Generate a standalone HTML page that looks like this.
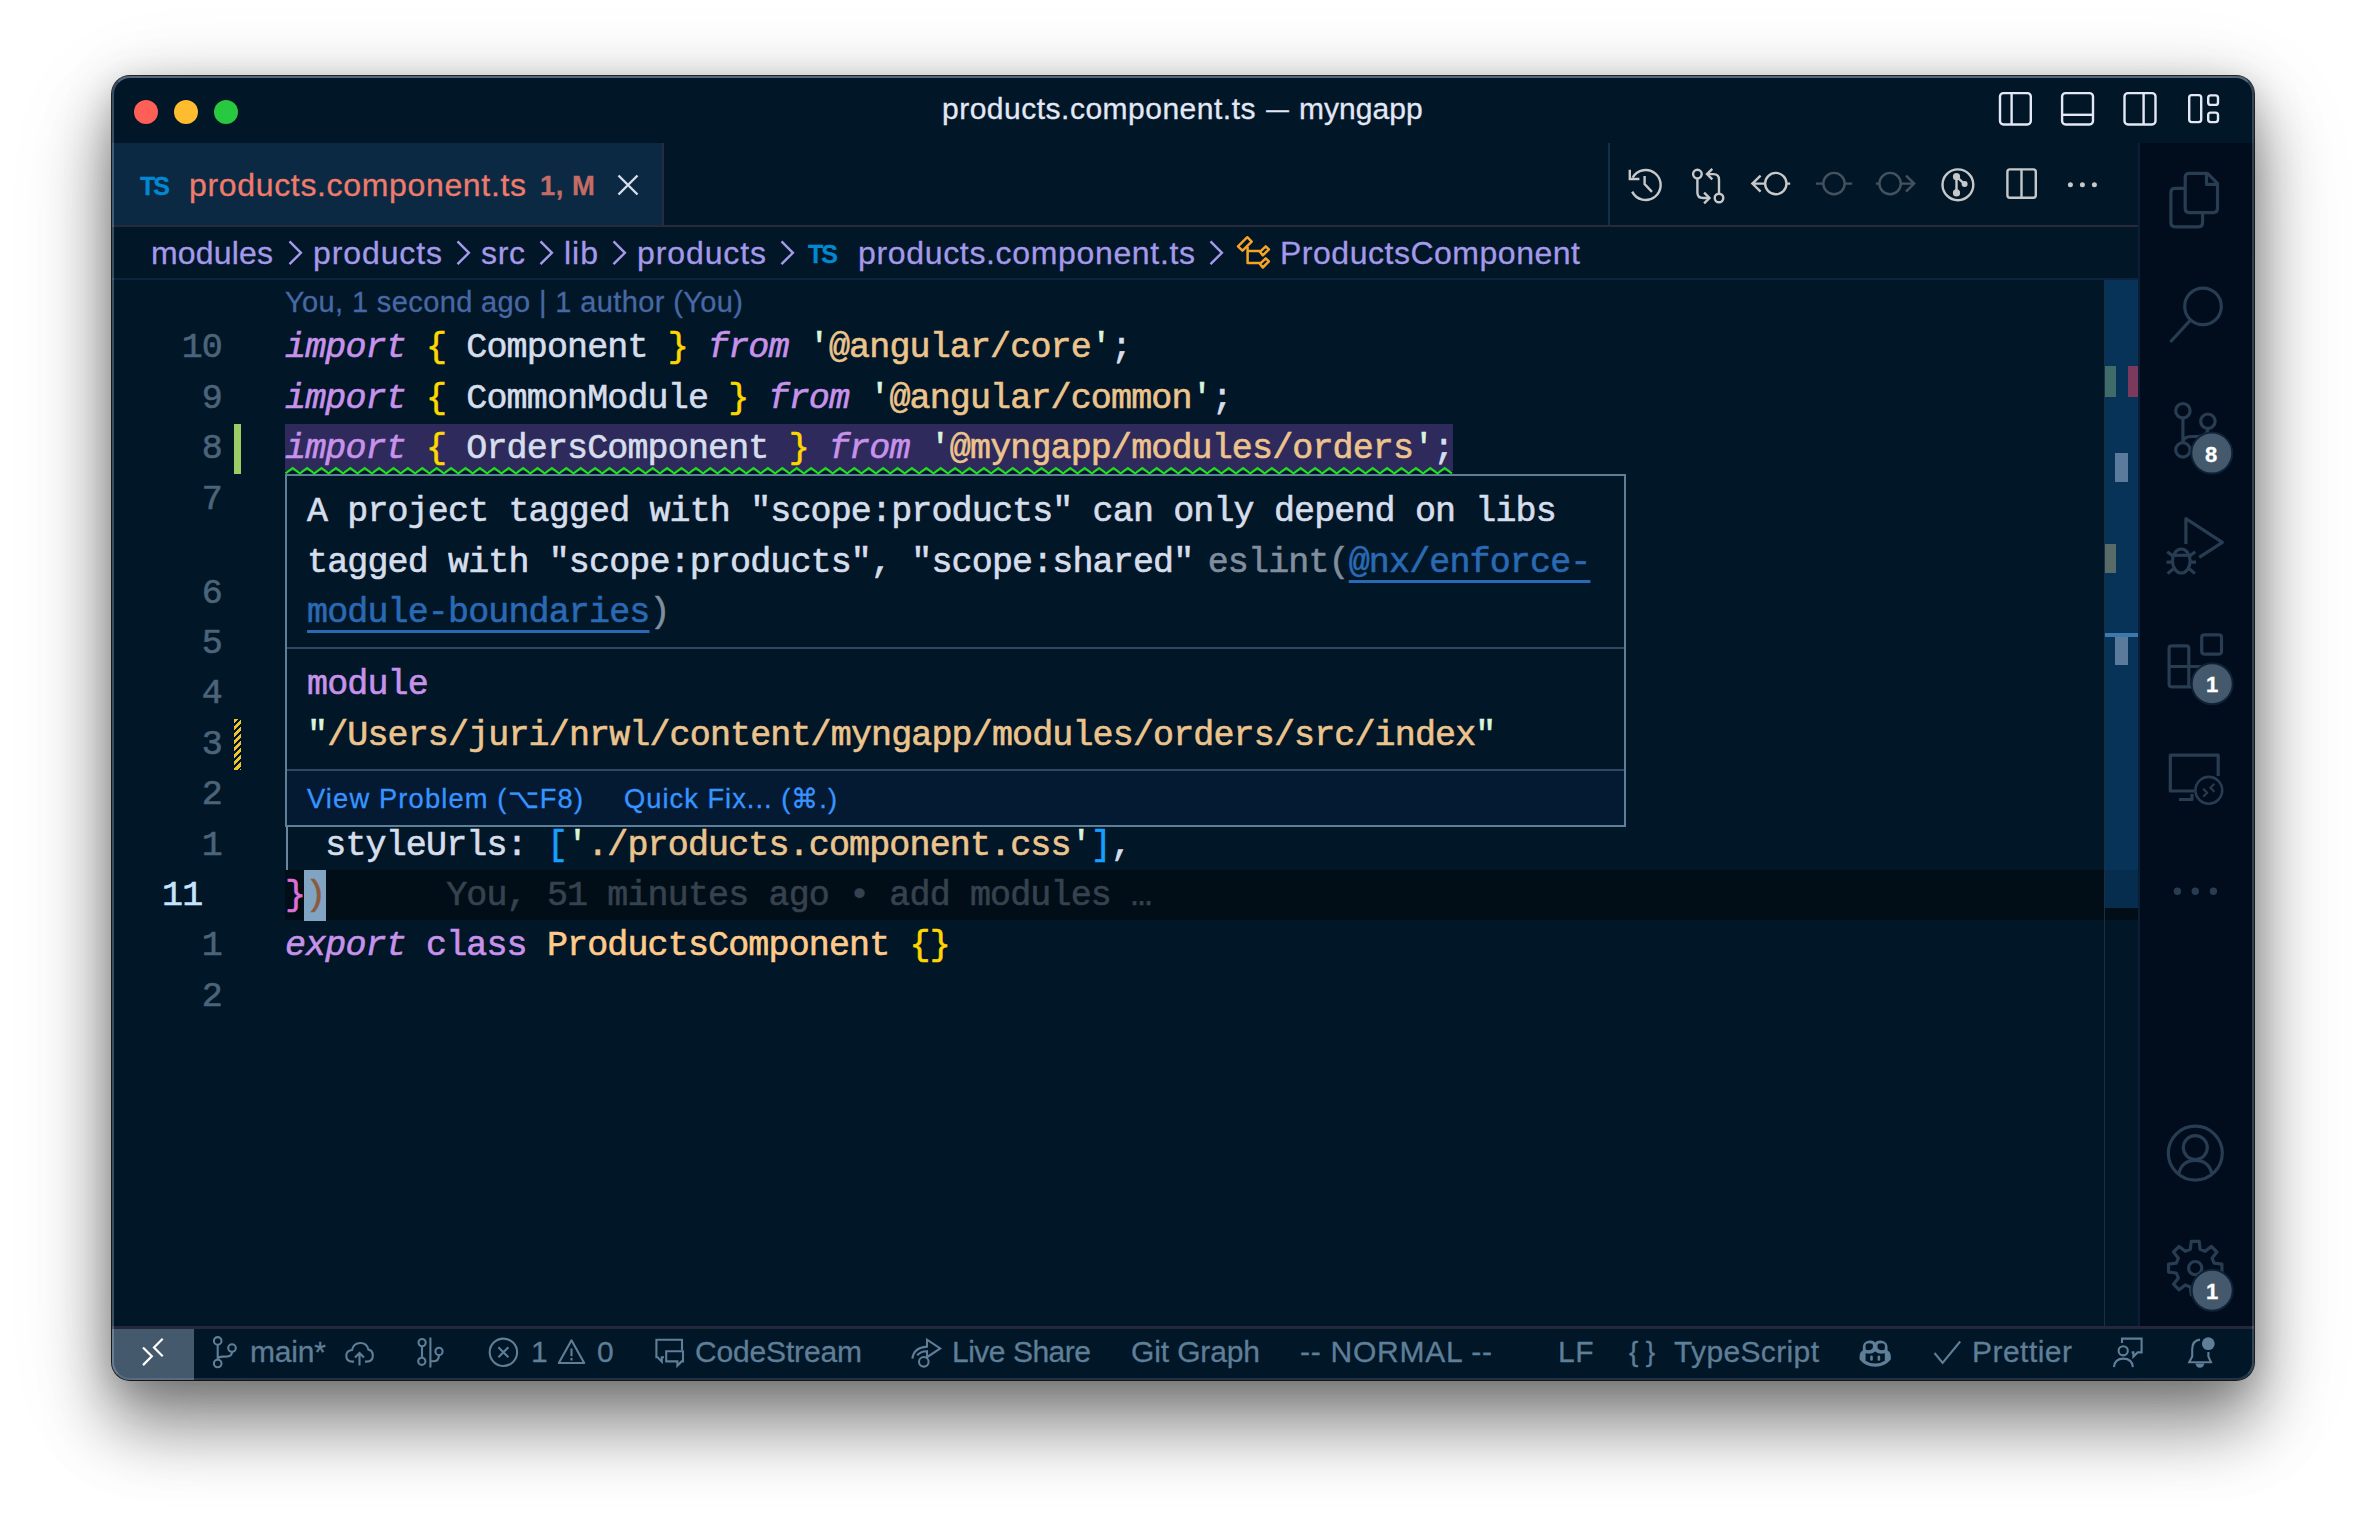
<!DOCTYPE html>
<html lang="en"><head><meta charset="utf-8"><title>products.component.ts — myngapp</title>
<style>
html,body{margin:0;padding:0;}
body{width:2366px;height:1528px;overflow:hidden;background:#fff;position:relative;font-family:"Liberation Sans",sans-serif;}
.b{position:absolute;box-sizing:border-box;}
.t{position:absolute;white-space:pre;-webkit-text-stroke:0.3px currentColor;}
#shadow{left:112px;top:76px;width:2142px;height:1304px;border-radius:18px;
  box-shadow:0 0 0 1px rgba(0,0,0,0.85),0 44px 66px 2px rgba(0,0,0,0.40),0 30px 110px rgba(0,0,0,0.14),0 8px 30px rgba(0,0,0,0.12),0 0 56px rgba(0,0,0,0.10);}
#win{left:112px;top:76px;width:2142px;height:1304px;border-radius:18px;background:#011627;overflow:hidden;}
#win .b{position:absolute;}
#rim{left:112px;top:76px;width:2142px;height:1304px;border-radius:18px;border:2px solid;border-color:rgba(205,222,242,0.42) rgba(191,212,242,0.26) rgba(191,212,242,0.16) rgba(191,212,242,0.30);pointer-events:none;}
.ln,.num,.hv{-webkit-text-stroke:0.6px currentColor;}
.mono{font-family:"Liberation Mono",monospace;}
.ln{position:absolute;left:285px;height:50.4px;line-height:50.4px;white-space:pre;font-family:"Liberation Mono",monospace;font-size:35px;letter-spacing:-0.86px;color:#d6deeb;}
.num{position:absolute;left:122px;width:100px;text-align:right;height:50.4px;line-height:50.4px;white-space:pre;font-family:"Liberation Mono",monospace;font-size:35px;letter-spacing:-0.86px;color:#4b6479;}
.k{color:#c792ea;font-style:italic;}
.kk{color:#c792ea;}
.y{color:#ffd700;}
.s{color:#ecc48d;}
.q{color:#d9f5dd;}
.c{color:#ffcb8b;}
.bl{color:#179fff;}
.pk{color:#da70d6;}
.hv{position:absolute;left:307px;height:50.4px;line-height:50.4px;white-space:pre;font-family:"Liberation Mono",monospace;font-size:35px;letter-spacing:-0.86px;color:#d6deeb;}
.dim{color:#818e9d;}
.lk{color:#2a6ab4;text-decoration:underline;text-decoration-thickness:2.5px;text-underline-offset:8px;}
svg#ic{position:absolute;left:0;top:0;width:2366px;height:1528px;pointer-events:none;}

</style></head>
<body>
<div class="b" id="shadow"></div>
<div class="b" id="win">
  <!-- coordinates inside #win are page coords minus (112,76) -->
  <div class="b" id="titlebar" style="left:0;top:0;width:2142px;height:67px;background:#011627;"></div>
  <div class="b" id="tabbar" style="left:0;top:67px;width:2027px;height:84px;background:#011627;border-bottom:2px solid #262a39;"></div>
  <div class="b" id="tab" style="left:0;top:67px;width:552px;height:82px;background:#0b2942;border-right:2px solid #272b3b;"></div>
  <div class="b" id="actsep" style="left:1496px;top:67px;width:2px;height:82px;background:#13304b;"></div>
  <div class="b" id="crumbs" style="left:0;top:151px;width:2027px;height:53px;background:#011627;border-bottom:2px solid #0b2540;"></div>
  <div class="b" id="editor" style="left:0;top:204px;width:2027px;height:1047px;background:#011627;"></div>
  <!-- current line highlight -->
  <div class="b" style="left:173px;top:794px;width:1854px;height:50px;background:#010e17;"></div>
  <!-- error line highlight -->
  <div class="b" style="left:173px;top:348px;width:1168px;height:47px;background:#2f2a5c;"></div>
  <!-- git gutter -->
  <div class="b" style="left:122px;top:348px;width:7px;height:50px;background:#9ccc65;"></div>
  <div class="b" style="left:122px;top:643px;width:7px;height:51px;background:repeating-linear-gradient(135deg,#efc430 0 3.2px,#011627 3.2px 5px);"></div>
  <!-- indent guide -->
  <div class="b" style="left:174px;top:744px;width:2px;height:50px;background:#6c869e;"></div>
  <!-- cursor -->
  <div class="b" style="left:192px;top:794px;width:22px;height:51px;background:#80a4c2;"></div>
  <!-- scrollbar / overview ruler -->
  <div class="b" style="left:1992px;top:204px;width:1px;height:1047px;background:#1b2f44;"></div>
  <div class="b" style="left:1993px;top:204px;width:34px;height:628px;background:#083358;"></div>
  <div class="b" style="left:1993px;top:794px;width:34px;height:38px;background:#062c4e;"></div>
  <div class="b" style="left:1993px;top:832px;width:34px;height:12px;background:#010e17;"></div>
  <div class="b" style="left:1993px;top:290px;width:11px;height:31px;background:#3f6b68;"></div>
  <div class="b" style="left:2016px;top:290px;width:10px;height:31px;background:#7b3a5c;"></div>
  <div class="b" style="left:2003px;top:377px;width:13px;height:29px;background:#5b7a9c;"></div>
  <div class="b" style="left:1993px;top:468px;width:11px;height:29px;background:#586b66;"></div>
  <div class="b" style="left:1993px;top:557px;width:34px;height:4px;background:#3f78ad;"></div>
  <div class="b" style="left:2003px;top:561px;width:13px;height:28px;background:#5b7a9c;"></div>
  <!-- activity bar -->
  <div class="b" id="actbar" style="left:2026px;top:67px;width:116px;height:1184px;background:#010c1d;border-left:2px solid #0a1f36;"></div>
  <!-- status bar -->
  <div class="b" id="status" style="left:0;top:1250px;width:2142px;height:54px;background:#011627;border-top:3px solid #24283a;"></div>
  <div class="b" id="remote" style="left:0;top:1253px;width:82px;height:51px;background:#44596b;"></div>
  <!-- hover widget -->
  <div class="b" id="hover" style="left:173px;top:398px;width:1341px;height:353px;background:#011627;border:2px solid #5f7e97;"></div>
  <div class="b" style="left:175px;top:571px;width:1337px;height:2px;background:#2f4860;"></div>
  <div class="b" style="left:175px;top:693px;width:1337px;height:2px;background:#2f4860;"></div>
  <div class="b" style="left:175px;top:695px;width:1337px;height:54px;background:#031a32;"></div>
</div>
<div class="b" id="rim"></div>
<!-- traffic lights -->
<div class="b" style="left:134px;top:100px;width:24px;height:24px;border-radius:50%;background:#ff5f57;"></div>
<div class="b" style="left:174px;top:100px;width:24px;height:24px;border-radius:50%;background:#febc2e;"></div>
<div class="b" style="left:214px;top:100px;width:24px;height:24px;border-radius:50%;background:#28c840;"></div>

<div id="code">
<div class="num" style="top:323.4px">10</div>
<div class="num" style="top:373.8px">9</div>
<div class="num" style="top:424.2px">8</div>
<div class="num" style="top:474.6px">7</div>
<div class="num" style="top:568.5px">6</div>
<div class="num" style="top:618.9px">5</div>
<div class="num" style="top:669.3px">4</div>
<div class="num" style="top:719.7px">3</div>
<div class="num" style="top:770.1px">2</div>
<div class="num" style="top:820.5px">1</div>
<div class="num" style="top:870.9px;left:162px;text-align:left;color:#c5e4fd">11</div>
<div class="num" style="top:921.3px">1</div>
<div class="num" style="top:971.7px">2</div>

<div class="ln" style="top:323.4px"><span class="k">import</span> <span class="y">{</span> Component <span class="y">}</span> <span class="k">from</span> <span class="q">'</span><span class="s">@angular/core</span><span class="q">'</span>;</div>
<div class="ln" style="top:373.8px"><span class="k">import</span> <span class="y">{</span> CommonModule <span class="y">}</span> <span class="k">from</span> <span class="q">'</span><span class="s">@angular/common</span><span class="q">'</span>;</div>
<div class="ln" style="top:424.2px"><span class="k">import</span> <span class="y">{</span> OrdersComponent <span class="y">}</span> <span class="k">from</span> <span class="q">'</span><span class="s">@myngapp/modules/orders</span><span class="q">'</span>;</div>
<div class="ln" style="top:820.5px">  styleUrls: <span class="bl">[</span><span class="q">'</span><span class="s">./products.component.css</span><span class="q">'</span><span class="bl">]</span>,</div>
<div class="ln" style="top:870.9px"><span class="pk">}</span><span style="color:#8b5a3c">)</span>      <span style="color:#36424e">You, 51 minutes ago • add modules …</span></div>
<div class="ln" style="top:921.3px"><span class="k">export</span> <span class="kk">class</span> <span class="c">ProductsComponent</span> <span class="y">{}</span></div>

<div class="hv" style="top:487.4px">A project tagged with "scope:products" can only depend on libs</div>
<div class="hv" style="top:537.8px">tagged with "scope:products", "scope:shared"<span class="dim" style="padding-left:14.4px">eslint(</span><span class="lk">@nx/enforce-</span></div>
<div class="hv" style="top:588.2px"><span class="lk">module-boundaries</span><span class="dim">)</span></div>
<div class="hv" style="top:659.9px"><span class="kk">module</span></div>
<div class="hv" style="top:710.5px"><span class="q">"</span><span class="s">/Users/juri/nrwl/content/myngapp/modules/orders/src/index</span><span class="q">"</span></div>
</div>

<svg id="ic" viewBox="0 0 2366 1528" fill="none" stroke-linecap="butt" stroke-linejoin="miter">
<!-- squiggle -->
<polyline points="285.5,473.4 292.7,468.0 299.9,473.4 307.1,468.0 314.3,473.4 321.5,468.0 328.7,473.4 335.9,468.0 343.1,473.4 350.3,468.0 357.5,473.4 364.7,468.0 371.9,473.4 379.1,468.0 386.3,473.4 393.5,468.0 400.7,473.4 407.9,468.0 415.1,473.4 422.3,468.0 429.5,473.4 436.7,468.0 443.9,473.4 451.1,468.0 458.3,473.4 465.5,468.0 472.7,473.4 479.9,468.0 487.1,473.4 494.3,468.0 501.5,473.4 508.7,468.0 515.9,473.4 523.1,468.0 530.3,473.4 537.5,468.0 544.7,473.4 551.9,468.0 559.1,473.4 566.3,468.0 573.5,473.4 580.7,468.0 587.9,473.4 595.1,468.0 602.3,473.4 609.5,468.0 616.7,473.4 623.9,468.0 631.1,473.4 638.3,468.0 645.5,473.4 652.7,468.0 659.9,473.4 667.1,468.0 674.3,473.4 681.5,468.0 688.7,473.4 695.9,468.0 703.1,473.4 710.3,468.0 717.5,473.4 724.7,468.0 731.9,473.4 739.1,468.0 746.3,473.4 753.5,468.0 760.7,473.4 767.9,468.0 775.1,473.4 782.3,468.0 789.5,473.4 796.7,468.0 803.9,473.4 811.1,468.0 818.3,473.4 825.5,468.0 832.7,473.4 839.9,468.0 847.1,473.4 854.3,468.0 861.5,473.4 868.7,468.0 875.9,473.4 883.1,468.0 890.3,473.4 897.5,468.0 904.7,473.4 911.9,468.0 919.1,473.4 926.3,468.0 933.5,473.4 940.7,468.0 947.9,473.4 955.1,468.0 962.3,473.4 969.5,468.0 976.7,473.4 983.9,468.0 991.1,473.4 998.3,468.0 1005.5,473.4 1012.7,468.0 1019.9,473.4 1027.1,468.0 1034.3,473.4 1041.5,468.0 1048.7,473.4 1055.9,468.0 1063.1,473.4 1070.3,468.0 1077.5,473.4 1084.7,468.0 1091.9,473.4 1099.1,468.0 1106.3,473.4 1113.5,468.0 1120.7,473.4 1127.9,468.0 1135.1,473.4 1142.3,468.0 1149.5,473.4 1156.7,468.0 1163.9,473.4 1171.1,468.0 1178.3,473.4 1185.5,468.0 1192.7,473.4 1199.9,468.0 1207.1,473.4 1214.3,468.0 1221.5,473.4 1228.7,468.0 1235.9,473.4 1243.1,468.0 1250.3,473.4 1257.5,468.0 1264.7,473.4 1271.9,468.0 1279.1,473.4 1286.3,468.0 1293.5,473.4 1300.7,468.0 1307.9,473.4 1315.1,468.0 1322.3,473.4 1329.5,468.0 1336.7,473.4 1343.9,468.0 1351.1,473.4 1358.3,468.0 1365.5,473.4 1372.7,468.0 1379.9,473.4 1387.1,468.0 1394.3,473.4 1401.5,468.0 1408.7,473.4 1415.9,468.0 1423.1,473.4 1430.3,468.0 1437.5,473.4 1444.7,468.0 1451.9,473.4" stroke="#21de21" stroke-width="2.2" stroke-linejoin="miter"/>
<!-- title bar layout icons -->
<g stroke="#e4e8f5" stroke-width="2.4">
  <rect x="2000" y="93.1" width="30.8" height="31.4" rx="3.5"/><path d="M2011.6 93.1V124.5"/>
  <rect x="2062.1" y="93.1" width="30.9" height="31.4" rx="3.5"/><path d="M2062.1 114.8H2093"/>
  <rect x="2124.5" y="93.1" width="31" height="31.4" rx="3.5"/><path d="M2143.6 93.1V124.5"/>
  <rect x="2189.2" y="95.1" width="12" height="27" rx="2.5"/>
  <rect x="2208.2" y="95.4" width="9.8" height="9.5" rx="2.5"/>
  <rect x="2208.2" y="112.6" width="9.8" height="9.5" rx="2.5"/>
</g>
<!-- tab close -->
<path d="M618.5 175.5L637.5 194.5M637.5 175.5L618.5 194.5" stroke="#d6deeb" stroke-width="2.4"/>
<!-- editor actions -->
<g stroke="#c8c8c8" stroke-width="2.4">
  <!-- history -->
  <path d="M1632.6 177.6A15 15 0 1 1 1632.2 191.6"/>
  <path d="M1629.8 169.8V179H1639.4"/>
  <path d="M1644.6 176V184L1652 191.8"/>
  <!-- git compare -->
  <circle cx="1697.4" cy="174.1" r="4.3"/><circle cx="1719" cy="198" r="4.3"/>
  <path d="M1697.4 178.6V192.5Q1697.4 198 1703 198H1708.5"/>
  <path d="M1704.1 192.6L1709.5 198L1704.1 203.4"/>
  <path d="M1719 193.5V179.6Q1719 174.1 1713.4 174.1H1708"/>
  <path d="M1712.3 168.8L1707 174.1L1712.3 179.4"/>
  <!-- prev commit -->
  <circle cx="1775.8" cy="183.6" r="10.7"/>
  <path d="M1752.6 183.6H1765M1760.6 175.6L1752.4 183.6L1760.6 191.6M1786.6 183.6H1790.2"/>
</g>
<g stroke="#44525f" stroke-width="2.4">
  <circle cx="1834" cy="183.6" r="10.7"/><path d="M1816 183.6H1823.2M1844.8 183.6H1852.2"/>
  <circle cx="1890.1" cy="183.6" r="10.7"/>
  <path d="M1901 183.6H1914M1906 175.6L1914.2 183.6L1906 191.6M1875.8 183.6H1879.3"/>
</g>
<g stroke="#c8c8c8" stroke-width="2.4">
  <!-- gitlens -->
  <circle cx="1957.9" cy="184.8" r="15.4"/>
  <path d="M1956.5 176.7V192.9M1956.5 176.7L1964.6 184.1" />
  <circle cx="1956.5" cy="176.7" r="3.6" fill="#c8c8c8" stroke="none"/>
  <circle cx="1956.5" cy="192.9" r="3.6" fill="#c8c8c8" stroke="none"/>
  <circle cx="1964.6" cy="184.1" r="3" fill="#c8c8c8" stroke="none"/>
  <!-- split -->
  <rect x="2007.4" y="169.4" width="28.4" height="28.4" rx="2.5"/><path d="M2021.5 169.4V197.8"/>
</g>
<g fill="#c8c8c8"><circle cx="2070.4" cy="184.8" r="2.5"/><circle cx="2082.4" cy="184.8" r="2.5"/><circle cx="2094.4" cy="184.8" r="2.5"/></g>
<!-- breadcrumb chevrons -->
<g stroke="#a599e9" stroke-width="2.4">
  <path d="M289.5 241.4L300.9 252.8L289.5 264.2"/>
  <path d="M457.5 241.4L468.9 252.8L457.5 264.2"/>
  <path d="M540.5 241.4L551.9 252.8L540.5 264.2"/>
  <path d="M613.5 241.4L624.9 252.8L613.5 264.2"/>
  <path d="M781.5 241.4L792.9 252.8L781.5 264.2"/>
  <path d="M1210.5 241.4L1221.9 252.8L1210.5 264.2"/>
</g>
<!-- symbol class icon -->
<g stroke="#f5a526" stroke-width="2.5" stroke-linejoin="round">
  <path d="M1238 246.3L1247.3 237.2L1251.7 241.6L1242.5 250.7Z"/>
  <path d="M1247.6 246.8V263.1H1260.4M1247.6 251H1260.4"/>
  <path d="M1260 251.8L1265.7 246.3L1268.9 249.3L1262.8 255.4Z"/>
  <path d="M1260 263.9L1265.7 258.4L1268.9 261.4L1262.8 267.5Z"/>
</g>
<!-- activity bar icons -->
<g stroke="#283c52" stroke-width="3.2" stroke-linejoin="round">
  <!-- files -->
  <path d="M2207.5 173.4H2189.2Q2185.2 173.4 2185.2 177.4V208.6Q2185.2 212.6 2189.2 212.6H2213.5Q2217.5 212.6 2217.5 208.6V183.4Z"/>
  <path d="M2206.5 174V184.4H2217"/>
  <path d="M2185 188.3H2174.9Q2170.9 188.3 2170.9 192.3V222.8Q2170.9 226.8 2174.9 226.8H2198.6Q2202.6 226.8 2202.6 222.8V213"/>
  <!-- search -->
  <circle cx="2203" cy="306.4" r="18.3"/>
  <path d="M2190.6 319.8L2170.4 342"/>
  <!-- source control -->
  <circle cx="2182.9" cy="410.7" r="7.2"/><circle cx="2207.9" cy="421.2" r="7.2"/><circle cx="2182.9" cy="449.9" r="7.2"/>
  <path d="M2182.9 418V442.6M2207.9 428.5Q2207.9 436.5 2197 436.5H2192Q2182.9 436.5 2182.9 443"/>
  <!-- debug -->
  <path d="M2185.9 544V518.7L2222.4 542.3L2199.2 557.4"/>
  <ellipse cx="2181.3" cy="561" rx="8.8" ry="12"/>
  <path d="M2172.8 555.3H2189.8"/>
  <path d="M2167.2 551.8L2173.6 556.4M2166.5 562.2H2172.5M2167.6 573.6L2174 568.2M2195.4 551.8L2189 556.4M2196.1 562.2H2190.1M2195 573.6L2188.6 568.2"/>
  <!-- extensions -->
  <rect x="2201.7" y="634.9" width="19.8" height="19.2" rx="2.5"/>
  <path d="M2169.1 648.4Q2169.1 645.9 2171.6 645.9H2186.3Q2188.8 645.9 2188.8 648.4V686.8H2171.6Q2169.1 686.8 2169.1 684.3Z"/>
  <path d="M2169.1 666.5H2208V686.8H2188.8"/>
  <!-- remote explorer -->
  <path d="M2218.2 776V755.2H2170.3V791H2194"/>
  <path d="M2179 799.5H2192V794"/>
</g>
<g stroke="#283c52" stroke-width="2.6">
  <circle cx="2208.8" cy="790.3" r="13.4"/>
  <path d="M2203.2 788.7L2207.2 792.7L2203.2 796.7M2214.4 783.7L2210.4 787.7L2214.4 791.7" stroke-width="2"/>
</g>
<g fill="#283c52"><circle cx="2177.4" cy="891.3" r="3.7"/><circle cx="2195.3" cy="891.3" r="3.7"/><circle cx="2213.4" cy="891.3" r="3.7"/></g>
<g stroke="#283c52" stroke-width="3.2">
  <!-- account -->
  <circle cx="2195.3" cy="1153.1" r="27"/>
  <circle cx="2195.3" cy="1147.6" r="12"/>
  <path d="M2178.6 1174Q2182 1160.4 2195.3 1160.4Q2208.6 1160.4 2212 1174"/>
  <!-- gear -->
  <path d="M2200.1 1249.2L2199.2 1241.4L2191.2 1241.4L2190.3 1249.2L2185.3 1251.3L2179.1 1246.4L2173.5 1252.0L2178.4 1258.2L2176.3 1263.2L2168.5 1264.1L2168.5 1272.1L2176.3 1273.0L2178.4 1278.0L2173.5 1284.2L2179.1 1289.8L2185.3 1284.9L2190.3 1287.0L2191.2 1294.8L2199.2 1294.8L2200.1 1287.0L2205.1 1284.9L2211.3 1289.8L2216.9 1284.2L2212.0 1278.0L2214.1 1273.0L2221.9 1272.1L2221.9 1264.1L2214.1 1263.2L2212.0 1258.2L2216.9 1252.0L2211.3 1246.4L2205.1 1251.3Z" stroke-linejoin="round"/>
  <circle cx="2195.2" cy="1268.1" r="6.6"/>
</g>
<!-- badges -->
<g fill="#44596b" stroke="#0d2238" stroke-width="2">
  <circle cx="2211.8" cy="453.1" r="20.5"/>
  <circle cx="2212.2" cy="683.7" r="20.5"/>
  <circle cx="2212.2" cy="1290.3" r="20.5"/>
</g>

<!-- status bar icons -->
<path d="M143 1347.5L151.8 1356.3L143 1365.1M162.7 1338.7L154 1347.5L162.7 1356.3" stroke="#ffffff" stroke-width="2.2"/>
<g stroke="#5f7e97" stroke-width="2.1">
  <!-- branch -->
  <circle cx="217.7" cy="1340.9" r="3.8"/><circle cx="217.7" cy="1363.5" r="3.8"/><circle cx="232" cy="1348.1" r="3.8"/>
  <path d="M217.7 1344.8V1359.6M232 1352Q232 1356.6 226 1356.6H223Q217.7 1356.6 217.7 1359.6"/>
  <!-- cloud upload -->
  <path d="M354 1361.6H352.5Q346.3 1361.6 346.3 1355.8Q346.3 1350.6 352 1350Q353.5 1343 360.3 1343Q367 1343 368.4 1349.6Q372.8 1350.4 372.8 1355.4Q372.8 1361.6 366.5 1361.6H365"/>
  <path d="M359.5 1365.4V1353.4M355 1357.6L359.5 1353L364 1357.6"/>
  <!-- git graph -->
  <circle cx="422.1" cy="1342.6" r="3.6"/><circle cx="421.8" cy="1361.3" r="3.6"/><circle cx="439" cy="1351.4" r="3.6"/>
  <path d="M422 1346.3V1357.6M430.4 1337.4V1367.4M439 1355.2Q439 1361.3 433 1361.3H430.4"/>
  <!-- error -->
  <circle cx="503.4" cy="1352.3" r="13.7"/>
  <path d="M498.4 1347.3L508.4 1357.3M508.4 1347.3L498.4 1357.3"/>
  <!-- warning -->
  <path d="M571.5 1340.3L584.2 1363H558.8Z" stroke-linejoin="round"/>
  <path d="M571.5 1348.5V1356.2M571.5 1358V1360.6"/>
  <!-- comment discussion -->
  <path d="M664 1357.2H661.8V1361.6L657.6 1357.2H656.4V1339.8H682V1350"/>
  <path d="M666.2 1351.2H683V1361.4H681.6L677.4 1365.6V1361.4H666.2Z"/>
  <!-- live share -->
  <circle cx="923.8" cy="1361.8" r="4.8"/>
  <path d="M912.4 1358.6Q913.6 1347.6 927 1346.6V1339.6L940.2 1348.4L927 1357.2V1351.2Q920 1351.4 917.2 1355.4"/>
  <!-- check -->
  <path d="M1934.5 1353L1942.6 1362.9L1960.2 1341.5"/>
  <!-- feedback -->
  <circle cx="2123.2" cy="1350.8" r="4.6"/>
  <path d="M2113.9 1367.2Q2114.6 1358.6 2123.4 1358.6Q2132.2 1358.6 2132.9 1367.2"/>
  <path d="M2122 1343V1338.6H2141.6V1352.4H2137.6L2133.4 1356.6V1352.4H2131.6"/>
  <!-- bell -->
  <path d="M2200 1339.6Q2192.4 1340.2 2192.2 1349.4V1356.4L2189.2 1362.2H2211L2208.4 1356.6V1352"/>
</g>
<g fill="#5f7e97">
  <circle cx="2208.3" cy="1343.7" r="6.4"/>
  <path d="M2195.4 1363.6H2204.4Q2203.6 1367.8 2199.9 1367.8Q2196.2 1367.8 2195.4 1363.6Z"/>
  <!-- copilot -->
  <path d="M1859.6 1356.4Q1859.6 1351.8 1862.8 1350.4Q1861.6 1341.6 1869.4 1340.6Q1873.6 1340.2 1875.2 1342.6Q1876.8 1340.2 1881 1340.6Q1888.8 1341.6 1887.6 1350.4Q1890.8 1351.8 1890.8 1356.4V1359.6Q1885 1366.8 1875.2 1366.8Q1865.400 1366.8 1859.6 1359.6Z M1866.2 1343.8Q1864.6 1346 1865.8 1349.8Q1870.6 1351 1872.6 1348.4Q1873.6 1345.2 1872.2 1343.8Q1869.2 1342.6 1866.2 1343.8Z M1884.2 1343.8Q1885.8 1346 1884.6 1349.8Q1879.800 1351 1877.800 1348.4Q1876.800 1345.2 1878.200 1343.8Q1881.200 1342.6 1884.2 1343.8Z M1865.6 1353.2V1360.8Q1869.6 1363.6 1875.2 1363.6Q1880.8 1363.6 1884.8 1360.8V1353.2Q1879 1354.6 1875.2 1351.4Q1871.4 1354.6 1865.6 1353.2Z" fill-rule="evenodd"/>
  <rect x="1870.2" y="1355.4" width="2.6" height="5.4" rx="1.3"/><rect x="1877.6" y="1355.4" width="2.6" height="5.4" rx="1.3"/>
</g>

</svg>

<div id="texts">
<span class="t" id="t0" style="left:942px;top:89.41px;font-size:30px;line-height:39px;color:#e3e8f6;letter-spacing:0.499px;">products.component.ts</span>
<span class="t" id="t1" style="left:1266.3px;top:94.87px;font-size:22.6px;line-height:29px;color:#e3e8f6;letter-spacing:0.000px;">—</span>
<span class="t" id="t2" style="left:1299px;top:89.41px;font-size:30px;line-height:39px;color:#e3e8f6;letter-spacing:0.030px;">myngapp</span>
<span class="t" id="t3" style="left:140px;top:170.34px;font-size:25px;line-height:32px;color:#0288d1;letter-spacing:-1.953px;font-weight:700;">TS</span>
<span class="t" id="t4" style="left:189px;top:163.91px;font-size:32px;line-height:42px;color:#ef7b6c;letter-spacing:0.663px;">products.component.ts</span>
<span class="t" id="t5" style="left:540px;top:168.47px;font-size:27.5px;line-height:36px;color:#c46c66;letter-spacing:0.505px;font-weight:700;">1, M</span>
<span class="t" id="t6" style="left:151px;top:231.91px;font-size:32px;line-height:42px;color:#a599e9;letter-spacing:0.174px;">modules</span>
<span class="t" id="t7" style="left:313px;top:231.91px;font-size:32px;line-height:42px;color:#a599e9;letter-spacing:0.895px;">products</span>
<span class="t" id="t8" style="left:481px;top:231.91px;font-size:32px;line-height:42px;color:#a599e9;letter-spacing:0.672px;">src</span>
<span class="t" id="t9" style="left:564px;top:231.91px;font-size:32px;line-height:42px;color:#a599e9;letter-spacing:0.992px;">lib</span>
<span class="t" id="t10" style="left:637px;top:231.91px;font-size:32px;line-height:42px;color:#a599e9;letter-spacing:0.895px;">products</span>
<span class="t" id="t11" style="left:808px;top:238.34px;font-size:25px;line-height:32px;color:#0288d1;letter-spacing:-1.953px;font-weight:700;">TS</span>
<span class="t" id="t12" style="left:858px;top:231.91px;font-size:32px;line-height:42px;color:#a599e9;letter-spacing:0.663px;">products.component.ts</span>
<span class="t" id="t13" style="left:1280px;top:231.91px;font-size:32px;line-height:42px;color:#a599e9;letter-spacing:0.518px;">ProductsComponent</span>
<span class="t" id="t14" style="left:285px;top:282.95px;font-size:29px;line-height:38px;color:#4768a4;letter-spacing:0.376px;">You, 1 second ago | 1 author (You)</span>
<span class="t" id="t15" style="left:307px;top:781.44px;font-size:27.3px;line-height:35px;color:#3794ff;letter-spacing:1.145px;">View Problem (⌥F8)</span>
<span class="t" id="t16" style="left:624px;top:781.44px;font-size:27.3px;line-height:35px;color:#3794ff;letter-spacing:1.009px;">Quick Fix... (⌘.)</span>
<span class="t" id="t17" style="left:250px;top:1332.40px;font-size:30px;line-height:39px;color:#5f7e97;letter-spacing:-0.176px;">main*</span>
<span class="t" id="t18" style="left:531px;top:1332.40px;font-size:30px;line-height:39px;color:#5f7e97;letter-spacing:0.000px;">1</span>
<span class="t" id="t19" style="left:597px;top:1332.40px;font-size:30px;line-height:39px;color:#5f7e97;letter-spacing:0.000px;">0</span>
<span class="t" id="t20" style="left:695px;top:1332.40px;font-size:30px;line-height:39px;color:#5f7e97;letter-spacing:-0.158px;">CodeStream</span>
<span class="t" id="t21" style="left:952px;top:1332.40px;font-size:30px;line-height:39px;color:#5f7e97;letter-spacing:-0.493px;">Live Share</span>
<span class="t" id="t22" style="left:1131px;top:1332.40px;font-size:30px;line-height:39px;color:#5f7e97;letter-spacing:-0.133px;">Git Graph</span>
<span class="t" id="t23" style="left:1300px;top:1332.40px;font-size:30px;line-height:39px;color:#5f7e97;letter-spacing:0.739px;">-- NORMAL --</span>
<span class="t" id="t24" style="left:1558px;top:1332.40px;font-size:30px;line-height:39px;color:#5f7e97;letter-spacing:0.484px;">LF</span>
<span class="t" id="t25" style="left:1629px;top:1334.30px;font-size:28px;line-height:36px;color:#5f7e97;letter-spacing:-0.242px;">{ }</span>
<span class="t" id="t26" style="left:1674px;top:1332.40px;font-size:30px;line-height:39px;color:#5f7e97;letter-spacing:0.363px;">TypeScript</span>
<span class="t" id="t27" style="left:1972px;top:1332.40px;font-size:30px;line-height:39px;color:#5f7e97;letter-spacing:0.471px;">Prettier</span>
<span class="t" id="t28" style="left:2205px;top:439.88px;font-size:22px;line-height:29px;color:#ffffff;letter-spacing:0.000px;font-weight:700;">8</span>
<span class="t" id="t29" style="left:2206px;top:669.88px;font-size:22px;line-height:29px;color:#ffffff;letter-spacing:0.000px;font-weight:700;">1</span>
<span class="t" id="t30" style="left:2206px;top:1276.88px;font-size:22px;line-height:29px;color:#ffffff;letter-spacing:0.000px;font-weight:700;">1</span>
</div>
</body></html>
